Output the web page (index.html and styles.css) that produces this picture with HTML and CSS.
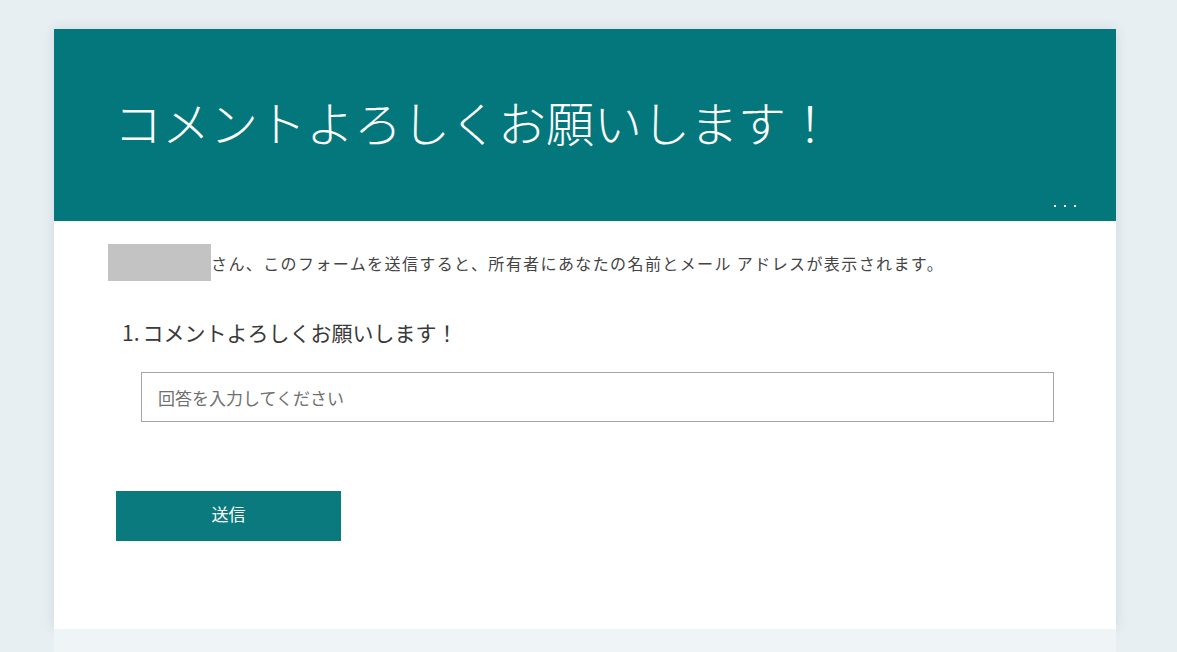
FILE: index.html
```html
<!DOCTYPE html>
<html lang="ja">
<head>
    <meta charset="UTF-8">
    <meta name="viewport" content="width=device-width, initial-scale=1.0">
    <title>コメントよろしくお願いします！</title>
    <link rel="stylesheet" href="styles.css">
</head>
<body>

    <div class="page">
        <div class="card">
            <div class="header">
                <h1 class="title">コメントよろしくお願いします！</h1>
                <div class="more"><span></span><span></span><span></span></div>
            </div>

            <div class="content">
                <p class="notice"><span class="name-mask"></span>さん、このフォームを送信すると、所有者にあなたの名前とメール アドレスが表示されます。</p>

                <div class="question">
                    <div class="q-title"><span class="q-num">1.</span>コメントよろしくお願いします！</div>
                    <input type="text" class="answer" placeholder="回答を入力してください">
                </div>

                <button class="submit">送信</button>
            </div>
        </div>
        <div class="footer"></div>
    </div>

</body>
</html>
```

FILE: styles.css
```css
body { margin: 0; background: #e8eff2; font-family: "Noto Sans CJK JP", "Noto Sans", sans-serif; color: #333; }
.page { padding: 29px 61px 0 54px; }
.card { background: #fff; box-shadow: 0 0 12px rgba(0, 60, 80, 0.12); }

.header { height: 192px; box-sizing: border-box; background: #03777b; color: #fff; padding: 60px 40px 0 60px; display: flex; flex-direction: column; }
.title { margin: 0; font-size: 48px; font-weight: 300; line-height: 64px; }
.more { margin-top: auto; align-self: flex-end; display: flex; gap: 8px; padding-bottom: 14px; }
.more span { width: 2px; height: 2px; background: #fff; }

.content { padding: 23px 62px 88px 54px; }
.notice { margin: 0; display: flex; align-items: center; font-size: 16px; letter-spacing: 1.4px; color: #444; }
.name-mask { display: inline-block; width: 103px; height: 37px; background: #c3c3c3; }

.question { padding: 36px 0 0 14px; }
.q-title { font-size: 21px; line-height: 30px; color: #3a3a3a; }
.q-num { margin-right: 3px; }
.answer { display: block; box-sizing: border-box; width: 913px; height: 50px; margin: 25px 0 0 19px; padding: 0 16px; border: 1px solid #a6a6a6; font-family: inherit; font-size: 17px; color: #333; }
.answer::placeholder { color: #707070; }

.submit { margin: 69px 0 0 8px; width: 225px; height: 50px; padding: 0 0 5px; border: none; background: #0a7a7e; color: #fff; font-family: inherit; font-size: 17px; }

.footer { height: 40px; background: #eff4f6; }
```
